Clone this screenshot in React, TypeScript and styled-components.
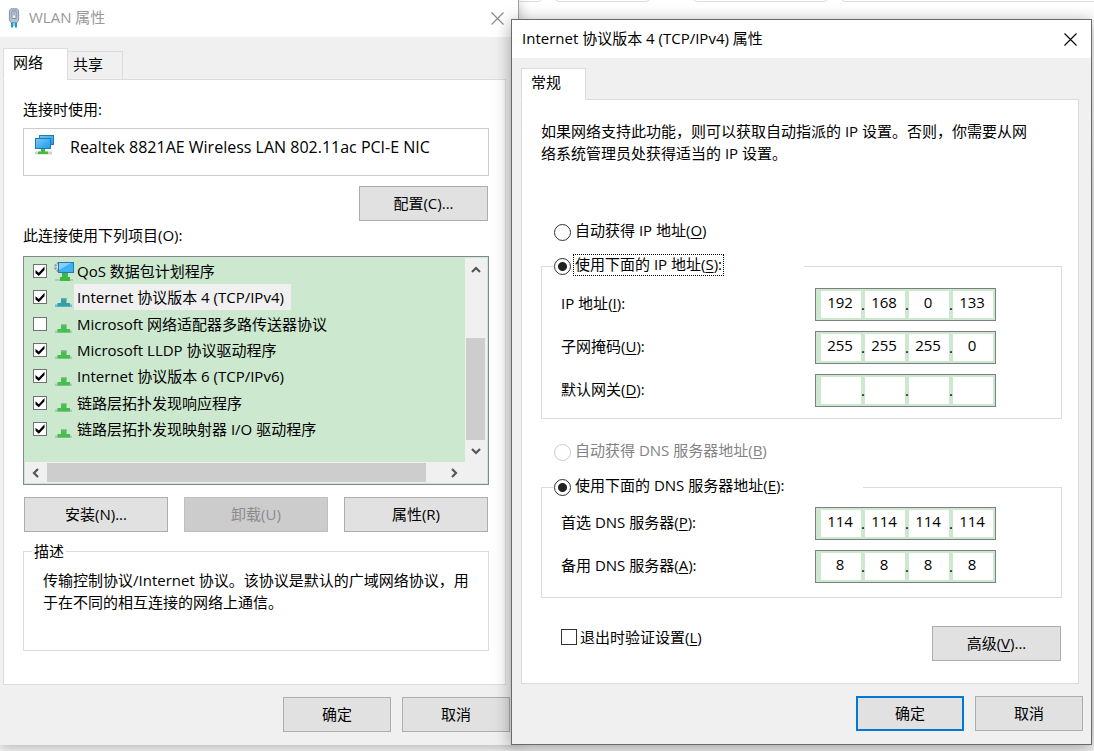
import React, { useState } from "react";
import styled, { createGlobalStyle, css } from "styled-components";

const GlobalStyle = createGlobalStyle`
  *, *::before, *::after { box-sizing: border-box; }
  body {
    margin: 0;
    background: #ffffff;
    color: #000000;
    font-family: "Open Sans", "Noto Sans CJK SC", sans-serif;
    font-size: 15px;
    line-height: 22px;
  }
  button, input { font: inherit; color: inherit; }
`;

/* ---------- desktop and windows ---------- */

const Desktop = styled.main`
  position: relative;
  display: flex;
  align-items: flex-start;
  min-height: 100vh;
  overflow: hidden;
  background: linear-gradient(#ffffff 0, #ffffff 80px, #f4f4f4 200px, #f4f4f4 100%);
`;

const Backdrop = styled.div`
  position: absolute;
  top: -10px;
  left: 440px;
  right: -10px;
  display: flex;
  gap: 13px;
`;

const BackdropBox = styled.div<{ $width?: number; $before?: number }>`
  flex: ${(p) => (p.$width ? `0 0 ${p.$width}px` : "1")};
  height: 12px;
  margin-left: ${(p) => p.$before ?? 0}px;
  border: 1px solid #dcdcdf;
  border-radius: 4px;
`;

const WindowFrame = styled.section<{ $front?: boolean }>`
  position: relative;
  background: #f0f0f0;
  ${(p) =>
    p.$front
      ? css`
          flex: 1;
          min-width: 560px;
          margin: 19px 2px 0 0;
          border: 1px solid #6a6a6a;
          box-shadow: 0 3px 16px rgba(0, 0, 0, 0.36);
        `
      : css`
          flex: 0 0 519px;
          margin-right: -8px;
          border-right: 1px solid #a0a0a0;
          box-shadow: 0 2px 12px rgba(0, 0, 0, 0.28);
        `}
`;

const TitleBar = styled.header<{ $inactive?: boolean }>`
  display: flex;
  align-items: center;
  gap: 9px;
  height: ${(p) => (p.$inactive ? 37 : 38)}px;
  padding: 0 5px 0 ${(p) => (p.$inactive ? 8 : 10)}px;
  background: #ffffff;
  color: ${(p) => (p.$inactive ? "#999999" : "#000000")};
`;

const Title = styled.h1`
  flex: 1;
  margin: 0;
  padding-bottom: 3px;
  font-size: 15px;
  font-weight: 400;
  white-space: nowrap;
`;

const CloseButton = styled.button`
  display: flex;
  align-items: center;
  justify-content: center;
  width: 32px;
  height: 32px;
  padding: 0;
  border: 0;
  background: transparent;
`;

const Tabs = styled.div<{ $inset: number; $height: number }>`
  position: relative;
  display: flex;
  align-items: flex-end;
  height: ${(p) => p.$height}px;
  margin-bottom: -1px;
  padding-left: ${(p) => p.$inset}px;
`;

const Tab = styled.button<{ $active?: boolean }>`
  width: ${(p) => (p.$active ? 65 : 56)}px;
  height: ${(p) => (p.$active ? 32 : 29)}px;
  margin: ${(p) => (p.$active ? "0" : "0 0 0 -1px")};
  padding: 0 0 4px ${(p) => (p.$active ? 9 : 5)}px;
  border: 1px solid #dcdcdc;
  border-bottom-color: ${(p) => (p.$active ? "#ffffff" : "#dcdcdc")};
  background: ${(p) => (p.$active ? "#ffffff" : "#f0f0f0")};
  text-align: left;
`;

const Panel = styled.div<{ $front?: boolean }>`
  display: flex;
  flex-direction: column;
  margin: ${(p) => (p.$front ? "0 12px 0 9px" : "0 12px 0 3px")};
  padding: ${(p) => (p.$front ? "20px 16px 22px 19px" : "18px 16px 33px 19px")};
  border: 1px solid #dcdcdc;
  background: #ffffff;
`;

const Footer = styled.footer`
  display: flex;
  justify-content: flex-end;
  gap: 11px;
  padding: 12px 8px 13px;
`;

const Button = styled.button<{ $width?: number; $primary?: boolean }>`
  flex: none;
  width: ${(p) => p.$width ?? 108}px;
  height: 35px;
  padding: 0 0 2px;
  border: ${(p) => (p.$primary ? "2px solid #0078d7" : "1px solid #adadad")};
  background: #e1e1e1;
  white-space: nowrap;
  &:disabled {
    border-color: #bfbfbf;
    background: #cccccc;
    color: #8b8b8b;
  }
`;

/* ---------- shared form parts ---------- */

const CheckBox = styled.input.attrs({ type: "checkbox" })<{ $size: number }>`
  position: relative;
  flex: none;
  appearance: none;
  width: ${(p) => p.$size}px;
  height: ${(p) => p.$size}px;
  margin: 0;
  border: 1px solid ${(p) => (p.$size > 14 ? "#333333" : "#707070")};
  background: #ffffff;
  &:checked::after {
    content: "";
    position: absolute;
    inset: 1px;
    background: #000000;
    clip-path: polygon(5% 38%, 38% 66%, 95% 4%, 95% 38%, 38% 98%, 5% 70%);
  }
`;

const Radio = styled.input.attrs({ type: "radio" })`
  flex: none;
  appearance: none;
  width: 17px;
  height: 17px;
  margin: 0;
  border: 1px solid #333333;
  border-radius: 50%;
  background: #ffffff;
  &:checked {
    background: radial-gradient(circle, #222222 4px, #ffffff 5px);
  }
  &:disabled {
    border-color: #cccccc;
  }
`;

const RadioRow = styled.div<{ $top: number }>`
  display: flex;
  align-items: center;
  gap: 2px;
  margin-top: ${(p) => p.$top}px;
  padding-left: 13px;
`;

const RadioLabel = styled.label<{ $focused?: boolean; $disabled?: boolean }>`
  height: 22px;
  padding: 0 1px;
  margin-bottom: 2px;
  border: 1px dotted ${(p) => (p.$focused ? "#000000" : "transparent")};
  color: ${(p) => (p.$disabled ? "#838383" : "inherit")};
  line-height: 18px;
  white-space: nowrap;
`;

const Key = styled.u`
  text-decoration-thickness: 1px;
  text-underline-offset: 2px;
`;

const Group = styled.fieldset<{ $top: number }>`
  min-width: 0;
  margin: ${(p) => p.$top}px 0 0;
  padding: 0;
  border: 1px solid #dcdcdc;
`;

const GroupLegend = styled.legend<{ $width: number }>`
  display: flex;
  align-items: center;
  gap: 2px;
  width: ${(p) => p.$width}px;
  height: 22px;
  margin-left: 12px;
  padding: 0;
`;

/* ---------- WLAN window ---------- */

const Caption = styled.p<{ $top?: number }>`
  margin: ${(p) => p.$top ?? 0}px 0 0;
`;

const AdapterBox = styled.div`
  display: flex;
  align-items: flex-start;
  gap: 16px;
  height: 48px;
  margin-top: 8px;
  padding: 6px 10px;
  border: 1px solid #cccccc;
  white-space: nowrap;
  svg { flex: none; }
`;

const AdapterName = styled.span`
  padding-top: 1px;
  font-size: 16px;
`;

const ConfigureRow = styled.div`
  display: flex;
  justify-content: flex-end;
  margin-top: 10px;
  padding-right: 1px;
`;

const ListBox = styled.div`
  display: grid;
  grid-template-columns: 1fr 22px;
  grid-template-rows: 204px 21px;
  margin-top: 10px;
  padding: 1px;
  border: 1px solid #828790;
  background: #cce8cf;
`;

const Items = styled.ul`
  display: flex;
  flex-direction: column;
  height: 184px;
  margin: 0;
  padding: 0 0 0 8px;
  list-style: none;
`;

const Item = styled.li`
  display: flex;
  flex: 1;
  align-items: center;
  svg { flex: none; margin-left: 7px; }
`;

const ItemLabel = styled.label<{ $selected?: boolean }>`
  display: flex;
  align-items: center;
  height: 26px;
  padding: 0 7px 0 3px;
  background: ${(p) => (p.$selected ? "#f0f0f0" : "transparent")};
  white-space: pre;
`;

const ScrollBar = styled.div<{ $vertical?: boolean }>`
  display: flex;
  flex-direction: ${(p) => (p.$vertical ? "column" : "row")};
  padding: ${(p) => (p.$vertical ? "0 2px 0 1px" : "1px 0 1px 0")};
  background: #f0f0f0;
`;

const ScrollArrow = styled.button<{ $size: number }>`
  display: flex;
  flex: 0 0 ${(p) => p.$size}px;
  align-items: center;
  justify-content: center;
  padding: 0;
  border: 0;
  background: transparent;
`;

const Track = styled.div<{ $vertical?: boolean; $size: number }>`
  display: flex;
  flex: 1;
  flex-direction: ${(p) => (p.$vertical ? "column" : "row")};
  justify-content: ${(p) => (p.$vertical ? "flex-end" : "flex-start")};
  &::before {
    content: "";
    flex: 0 0 ${(p) => p.$size}px;
    background: #cdcdcd;
  }
`;

const Corner = styled.div`
  background: #f0f0f0;
`;

const ActionRow = styled.div`
  display: flex;
  justify-content: space-between;
  margin-top: 12px;
  padding: 0 1px;
`;

const DescriptionLegend = styled.legend`
  height: 22px;
  margin-left: 8px;
  padding: 0 2px;
`;

const Description = styled.p`
  height: 88px;
  margin: 0;
  padding: 7px 0 0 19px;
  white-space: nowrap;
`;

/* ---------- IPv4 window ---------- */

const Intro = styled.p`
  margin: 0;
  white-space: nowrap;
`;

const Fields = styled.div<{ $pad: string }>`
  display: flex;
  flex-direction: column;
  gap: 10px;
  padding: ${(p) => p.$pad};
`;

const Field = styled.div`
  display: flex;
  align-items: center;
  justify-content: space-between;
  height: 33px;
  white-space: nowrap;
`;

const FieldLabel = styled.label`
  padding-bottom: 3px;
`;

const AddressBox = styled.div`
  display: flex;
  width: 181px;
  height: 33px;
  padding: 2px 2px 2px 5px;
  border: 1px solid #7f7f7f;
  background: #cce8cf;
`;

const Octet = styled.input.attrs({ type: "text", inputMode: "numeric" })`
  width: 40px;
  height: 27px;
  padding: 0 2px 5px 0;
  border: 0;
  background: #ffffff;
  text-align: center;
`;

const Dot = styled.span`
  width: 4px;
  line-height: 26px;
`;

const BottomRow = styled.div`
  display: flex;
  align-items: flex-start;
  justify-content: space-between;
  margin-top: 28px;
  padding: 0 1px 0 20px;
`;

const ExitCheck = styled.label`
  display: flex;
  align-items: center;
  gap: 3px;
  height: 22px;
`;

/* ---------- icons ---------- */

const Cross = ({ color }: { color: string }) => (
  <svg width="13" height="13" viewBox="0 0 13 13" aria-hidden="true">
    <path d="M.5.5l12 12M12.5.5l-12 12" stroke={color} strokeWidth="1.1" fill="none" />
  </svg>
);

const PlugIcon = () => (
  <svg width="12" height="21" viewBox="0 0 12 21" aria-hidden="true">
    <path d="M3 14h2v5.500H3zM7 14h2v5.500H7z" fill="#1d9bd1" />
    <path d="M5 14h2v4H5z" fill="#8ad4f0" />
    <path d="M3 .8h6l1.6 1.800v9.600L9 14.500H3l-1.600-2.300V2.600z" fill="#b4c3d2" stroke="#8495a8" />
    <path d="M4 3h4v7.500H4z" fill="#eef3f7" stroke="#7c8c9d" />
    <path d="M6 3.500v4" stroke="#69798b" />
  </svg>
);

const MonitorsIcon = () => (
  <svg width="20" height="21" viewBox="0 0 20 21" aria-hidden="true">
    <defs>
      <linearGradient id="screen" x1="0" y1="0" x2="1" y2="1">
        <stop offset="0" stopColor="#7cc8f6" />
        <stop offset="1" stopColor="#169cea" />
      </linearGradient>
    </defs>
    <path d="M1 16.500h17v3H1z" fill="#d0d3d5" />
    <rect x="5.500" y=".5" width="14" height="9" fill="url(#screen)" stroke="#2379b5" />
    <rect x="1.500" y="3.500" width="15" height="10" fill="url(#screen)" stroke="#2379b5" />
    <path d="M7 14h4v2.500h3V19H4v-2.500h3z" fill="#46bb3b" />
  </svg>
);

const QosIcon = () => (
  <svg width="20" height="21" viewBox="0 0 20 21" aria-hidden="true">
    <circle cx="5" cy="6" r="3.700" fill="#dce4e2" stroke="#8d9b9b" strokeWidth="2.400" strokeDasharray="2 1" />
    <path d="M1 18h18v2H1z" fill="#b4c9b7" />
    <rect x="4.500" y="1.500" width="15" height="10" fill="#3fb0f2" stroke="#2379b5" />
    <path d="M5 2h12L5 9z" fill="#86d0fa" />
    <path d="M8 12h6v4h2v4H6v-4h2z" fill="#3db843" />
  </svg>
);

const ProtocolIcon = ({ selected }: { selected?: boolean }) => (
  <svg width="20" height="21" viewBox="0 0 20 21" aria-hidden="true">
    <path d="M1 17.500h17v2.500H1z" fill={selected ? "#78b8dc" : "#a6cbb0"} />
    <path d="M7 11.500h5.500V16H16v3.500H3.500V16H7z" fill={selected ? "#329fa6" : "#46be50"} />
    <path d="M7 11.500h5.500V13H7z" fill={selected ? "#5499b5" : "#70b778"} />
  </svg>
);

const rotation = { up: 0, right: 90, down: 180, left: 270 };

const Chevron = ({ direction }: { direction: keyof typeof rotation }) => (
  <svg width="12" height="12" viewBox="0 0 12 12" aria-hidden="true">
    <path
      d="M2 8l4-4 4 4"
      transform={`rotate(${rotation[direction]} 6 6)`}
      fill="none"
      stroke="#555555"
      strokeWidth="2.200"
    />
  </svg>
);

/* ---------- data ---------- */

const components = [
  { name: "QoS 数据包计划程序", on: true },
  { name: "Internet 协议版本 4 (TCP/IPv4)", on: true },
  { name: "Microsoft 网络适配器多路传送器协议", on: false },
  { name: "Microsoft LLDP 协议驱动程序", on: true },
  { name: "Internet 协议版本 6 (TCP/IPv6)", on: true },
  { name: "链路层拓扑发现响应程序", on: true },
  { name: "链路层拓扑发现映射器 I/O 驱动程序", on: true },
];

interface AddressProps {
  id: string;
  label: string;
  hotkey: string;
  value: string[];
}

const AddressField = ({ id, label, hotkey, value }: AddressProps) => (
  <Field>
    <FieldLabel htmlFor={`${id}-0`}>
      {label}(<Key>{hotkey}</Key>):
    </FieldLabel>
    <AddressBox>
      {value.map((octet, i) => (
        <React.Fragment key={i}>
          {i > 0 && <Dot>.</Dot>}
          <Octet id={`${id}-${i}`} aria-label={`${label} ${i + 1}`} defaultValue={octet} maxLength={3} />
        </React.Fragment>
      ))}
    </AddressBox>
  </Field>
);

const WlanWindow = () => {
  const [selected, setSelected] = useState(1);
  return (
    <WindowFrame aria-label="WLAN 属性">
      <TitleBar $inactive>
        <PlugIcon />
        <Title>WLAN 属性</Title>
        <CloseButton aria-label="关闭">
          <Cross color="#8a8a8a" />
        </CloseButton>
      </TitleBar>
      <Tabs $inset={3} $height={43} role="tablist">
        <Tab $active role="tab" aria-selected="true">网络</Tab>
        <Tab role="tab" aria-selected="false">共享</Tab>
      </Tabs>
      <Panel>
        <Caption>连接时使用:</Caption>
        <AdapterBox>
          <MonitorsIcon />
          <AdapterName>Realtek 8821AE Wireless LAN 802.11ac PCI-E NIC</AdapterName>
        </AdapterBox>
        <ConfigureRow>
          <Button $width={129}>配置(C)...</Button>
        </ConfigureRow>
        <Caption $top={3}>此连接使用下列项目(O):</Caption>
        <ListBox>
          <Items>
            {components.map((item, i) => (
              <Item key={item.name} onClick={() => setSelected(i)}>
                <CheckBox id={`component-${i}`} $size={14} defaultChecked={item.on} />
                {i === 0 ? <QosIcon /> : <ProtocolIcon selected={i === selected} />}
                <ItemLabel htmlFor={`component-${i}`} $selected={i === selected}>
                  {item.name}
                </ItemLabel>
              </Item>
            ))}
          </Items>
          <ScrollBar $vertical>
            <ScrollArrow $size={24} aria-label="向上滚动"><Chevron direction="up" /></ScrollArrow>
            <Track $vertical $size={102} />
            <ScrollArrow $size={22} aria-label="向下滚动"><Chevron direction="down" /></ScrollArrow>
          </ScrollBar>
          <ScrollBar>
            <ScrollArrow $size={22} aria-label="向左滚动"><Chevron direction="left" /></ScrollArrow>
            <Track $size={379} />
            <ScrollArrow $size={22} aria-label="向右滚动"><Chevron direction="right" /></ScrollArrow>
          </ScrollBar>
          <Corner />
        </ListBox>
        <ActionRow>
          <Button $width={144}>安装(N)...</Button>
          <Button $width={144} disabled>卸载(U)</Button>
          <Button $width={144}>属性(R)</Button>
        </ActionRow>
        <Group $top={8}>
          <DescriptionLegend>描述</DescriptionLegend>
          <Description>
            传输控制协议/Internet 协议。该协议是默认的广域网络协议，用
            <br />
            于在不同的相互连接的网络上通信。
          </Description>
        </Group>
      </Panel>
      <Footer>
        <Button>确定</Button>
        <Button>取消</Button>
      </Footer>
    </WindowFrame>
  );
};

const Ipv4Window = () => (
  <WindowFrame $front aria-label="Internet 协议版本 4 (TCP/IPv4) 属性">
    <TitleBar>
      <Title>Internet 协议版本 4 (TCP/IPv4) 属性</Title>
      <CloseButton aria-label="关闭">
        <Cross color="#000000" />
      </CloseButton>
    </TitleBar>
    <Tabs $inset={9} $height={42} role="tablist">
      <Tab $active role="tab" aria-selected="true">常规</Tab>
    </Tabs>
    <Panel $front>
      <Intro>
        如果网络支持此功能，则可以获取自动指派的 IP 设置。否则，你需要从网
        <br />
        络系统管理员处获得适当的 IP 设置。
      </Intro>
      <RadioRow $top={56}>
        <Radio id="ip-auto" name="ip-mode" />
        <RadioLabel htmlFor="ip-auto">自动获得 IP 地址(<Key>O</Key>)</RadioLabel>
      </RadioRow>
      <Group $top={11}>
        <GroupLegend $width={250}>
          <Radio id="ip-manual" name="ip-mode" defaultChecked />
          <RadioLabel htmlFor="ip-manual" $focused>使用下面的 IP 地址(<Key>S</Key>):</RadioLabel>
        </GroupLegend>
        <Fields $pad="11px 65px 11px 19px">
          <AddressField id="ip" label="IP 地址" hotkey="I" value={["192", "168", "0", "133"]} />
          <AddressField id="mask" label="子网掩码" hotkey="U" value={["255", "255", "255", "0"]} />
          <AddressField id="gateway" label="默认网关" hotkey="D" value={["", "", "", ""]} />
        </Fields>
      </Group>
      <RadioRow $top={21}>
        <Radio id="dns-auto" name="dns-mode" disabled />
        <RadioLabel htmlFor="dns-auto" $disabled>自动获得 DNS 服务器地址(<Key>B</Key>)</RadioLabel>
      </RadioRow>
      <Group $top={12}>
        <GroupLegend $width={309}>
          <Radio id="dns-manual" name="dns-mode" defaultChecked />
          <RadioLabel htmlFor="dns-manual">使用下面的 DNS 服务器地址(<Key>E</Key>):</RadioLabel>
        </GroupLegend>
        <Fields $pad="9px 65px 14px 19px">
          <AddressField id="dns1" label="首选 DNS 服务器" hotkey="P" value={["114", "114", "114", "114"]} />
          <AddressField id="dns2" label="备用 DNS 服务器" hotkey="A" value={["8", "8", "8", "8"]} />
        </Fields>
      </Group>
      <BottomRow>
        <ExitCheck>
          <CheckBox $size={16} />
          <span>退出时验证设置(<Key>L</Key>)</span>
        </ExitCheck>
        <Button $width={129}>高级(<Key>V</Key>)...</Button>
      </BottomRow>
    </Panel>
    <Footer>
      <Button $primary>确定</Button>
      <Button>取消</Button>
    </Footer>
  </WindowFrame>
);

export default function App() {
  return (
    <>
      <GlobalStyle />
      <Desktop>
        <Backdrop>
          <BackdropBox $width={102} />
          <BackdropBox $width={95} />
          <BackdropBox $width={135} $before={30} />
          <BackdropBox />
        </Backdrop>
        <WlanWindow />
        <Ipv4Window />
      </Desktop>
    </>
  );
}
